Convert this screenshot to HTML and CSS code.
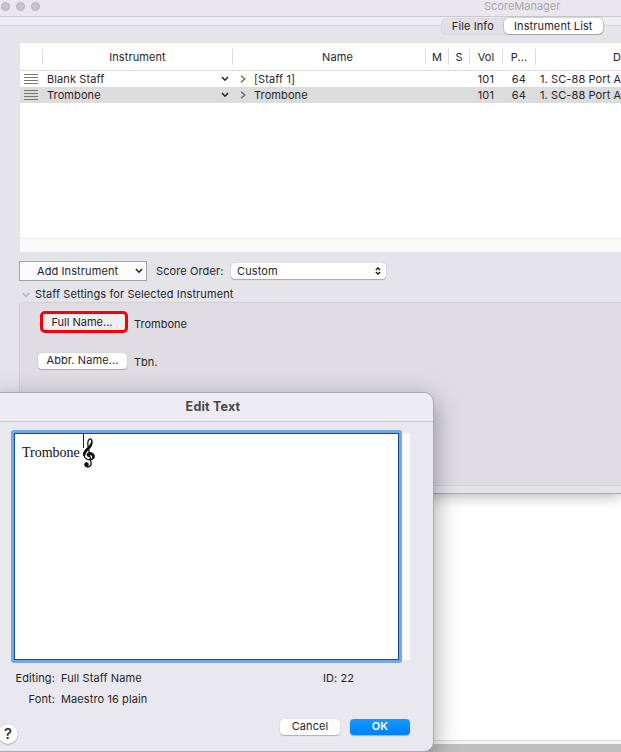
FILE: index.html
```html
<!DOCTYPE html>
<html lang="en">
<head>
    <meta charset="utf-8">
    <title>ScoreManager</title>
    <link rel="stylesheet" href="styles.css">
</head>
<body>
    <div class="desktop">
        <div class="manager">
            <div class="titlebar">
                <div class="lights"><i></i><i></i><i></i></div>
                <span class="title">ScoreManager</span>
            </div>
            <div class="tabbar">
                <div class="tabs">
                    <span class="tab">File Info</span>
                    <span class="tab active">Instrument List</span>
                </div>
            </div>

            <div class="table">
                <div class="row head">
                    <span></span>
                    <span>Instrument</span>
                    <span class="name-head">Name</span>
                    <span>M</span>
                    <span>S</span>
                    <span>Vol</span>
                    <span>P...</span>
                    <span class="device">D</span>
                </div>
                <div class="row">
                    <span class="grip"><svg width="14" height="11"><path d="M0 1.5h14M0 4.5h14M0 7.5h14M0 10.5h14"/></svg></span>
                    <span class="instrument">Blank Staff <svg class="down" width="8" height="6"><path d="M1 1l3 3.2L7 1"/></svg></span>
                    <span class="name"><svg class="right" width="6" height="8"><path d="M1 .8L4.8 4 1 7.2"/></svg>[Staff 1]</span>
                    <span></span>
                    <span></span>
                    <span class="num">101</span>
                    <span class="num">64</span>
                    <span class="port">1. SC-88 Port A</span>
                </div>
                <div class="row selected">
                    <span class="grip"><svg width="14" height="11"><path d="M0 1.5h14M0 4.5h14M0 7.5h14M0 10.5h14"/></svg></span>
                    <span class="instrument">Trombone <svg class="down" width="8" height="6"><path d="M1 1l3 3.2L7 1"/></svg></span>
                    <span class="name"><svg class="right" width="6" height="8"><path d="M1 .8L4.8 4 1 7.2"/></svg>Trombone</span>
                    <span></span>
                    <span></span>
                    <span class="num">101</span>
                    <span class="num">64</span>
                    <span class="port">1. SC-88 Port A</span>
                </div>
                <div class="scroll-track"></div>
            </div>

            <div class="controls">
                <div class="add">Add Instrument <svg class="down" width="8" height="6"><path d="M1 1l3 3.2L7 1"/></svg></div>
                <span class="order-label">Score Order:</span>
                <div class="select">Custom <svg class="updown" width="6" height="8"><path d="M.8 3L3 .9 5.2 3M.8 5L3 7.1 5.2 5"/></svg></div>
            </div>

            <div class="disclosure">
                <svg width="8" height="6"><path d="M.8 1L4 4.6 7.2 1"/></svg>
                <span>Staff Settings for Selected Instrument</span>
            </div>
            <div class="settings">
                <div class="setting">
                    <div class="button marked">Full Name...</div>
                    <span>Trombone</span>
                </div>
                <div class="setting">
                    <div class="button">Abbr. Name...</div>
                    <span>Tbn.</span>
                </div>
            </div>
        </div>
        <div class="document"></div>
        <div class="document-edge"></div>

        <div class="dialog">
            <div class="dialog-title">Edit Text</div>
            <div class="editor">
                <div class="textarea">
                    <span class="text">Trombone</span>
                    <div class="caret"></div>
                    <svg class="clef" width="14" height="32" viewBox="0 0 14 32">
                        <path class="stroke" d="M7.3 19.7C5.4 19.3 5.2 16.9 7.1 16.2C9.7 15.3 11.9 17.3 11.5 19.8C11.1 22.6 7.3 23.5 4.6 22C1.5 20.2 1.2 16.5 3.2 13.8C5.2 11.2 9.5 8.3 9.7 4.7C9.8 2.8 9.1 1.5 8.1 1.9C6.2 2.8 5.5 6 6 9L9.1 26.1C9.6 29.3 5.4 31.2 3.4 28.9"/>
                        <path class="fill" d="M.8 18.5C.8 14.7 3.8 12 6.3 9.6C8.2 7.7 9.2 6.3 9 3.7L10.4 3.5C11.2 7.4 9.6 10.2 7.5 12.2C5.1 14.5 3.3 16 3.2 19ZM7 15.3C10.9 14.5 13.9 17.8 12.6 20.8C12 22.2 10.2 23.2 9 23C11.2 20.7 10.3 18 7.6 18.1C6.3 18.2 6 19.2 7.5 20.1C3.8 19.6 3.7 16 7 15.3Z"/>
                        <circle class="fill" cx="4.5" cy="27.5" r="2.3"/>
                    </svg>
                </div>
                <div class="gutter"></div>
            </div>
            <div class="info">
                <span class="label">Editing:</span><span>Full Staff Name</span><span>ID: 22</span>
                <span class="label">Font:</span><span>Maestro 16 plain</span>
            </div>
            <div class="actions">
                <div class="help">?</div>
                <div class="button cancel">Cancel</div>
                <div class="button ok">OK</div>
            </div>
        </div>
    </div>
</body>
</html>
```
FILE: styles.css
```css
* {
    box-sizing: border-box;
}
body {
    margin: 0;
    font-family: Inter, "Liberation Sans", sans-serif;
    font-size: 11px;
    letter-spacing: 0.1px;
    line-height: 16px;
    color: #262528;
}
svg {
    display: block;
    flex: none;
    fill: none;
    stroke: #222;
}
.desktop {
    position: relative;
    width: 621px;
    height: 752px;
    overflow: hidden;
    background: #fff;
}

/* main window */
.manager {
    height: 494px;
    background: #e5e4e9;
    border-bottom: 1px solid #aaa9ac;
    box-shadow: 0 2px 14px rgba(0,0,0,0.3);
    position: relative;
}
.titlebar {
    display: flex;
    height: 17px;
    background: #e9e7ec;
    border-bottom: 1px solid #c9c8cc;
}
.lights {
    display: flex;
    gap: 6px;
    padding-top: 2px;
    padding-left: 1px;
    width: 484px;
}
.lights i {
    width: 9px;
    height: 9px;
    border-radius: 50%;
    background: #c6c4c8;
    border: 1px solid #b4b2b6;
}
.title {
    color: #aaa8ad;
    line-height: 13px;
    letter-spacing: 0;
}
.tabbar {
    height: 9px;
    background: #edecf1;
    border-bottom: 1px solid #d8d7db;
    padding: 1px 0 0 441px;
}
.tabs {
    display: flex;
    width: 163px;
    height: 17px;
    background: #e1e0e5;
    border: 1px solid #dad9dd;
    border-radius: 5px;
}
.tab {
    width: 62px;
    text-align: center;
    line-height: 15px;
}
.tab.active {
    width: 100px;
    height: 16px;
    margin-top: -1px;
    line-height: 17px;
    background: #fff;
    border-radius: 5px;
    box-shadow: 0 0 1px 1px rgba(0,0,0,0.12), 0 1px 1px rgba(0,0,0,0.15);
}

/* instrument table */
.table {
    display: flex;
    flex-direction: column;
    height: 209px;
    margin: 17px 0 0 20px;
    background: #fff;
}
.row {
    display: grid;
    grid-template-columns: 23px 190px 193px 23px 21px 33px 33px 1fr;
    height: 16px;
    white-space: nowrap;
    align-items: center;
}
.head {
    height: 28px;
    border-bottom: 1px solid #dedede;
    text-align: center;
}
.head span {
    height: 16px;
    border-right: 1px solid #dcdcdc;
}
.head .name-head {
    padding-left: 17px;
}
.head .device {
    border: 0;
    padding-left: 77px;
    text-align: left;
    letter-spacing: 0;
}
.selected {
    background: #dcdcdc;
}
.grip {
    padding: 0 0 2px 4px;
}
.grip svg {
    stroke: #777;
}
.instrument {
    display: flex;
    align-items: center;
    justify-content: space-between;
    padding: 0 4px;
}
.down {
    stroke-width: 1.5;
}
.name {
    display: flex;
    align-items: center;
    gap: 8px;
    padding-left: 7px;
}
.right {
    stroke: #666;
    stroke-width: 1.3;
}
.num {
    text-align: right;
    padding-right: 9px;
}
.num + .num {
    padding-right: 10px;
}
.port {
    padding-left: 4px;
}
.scroll-track {
    height: 14px;
    margin-top: auto;
    background: #fafafa;
    border-top: 1px solid #e6e6e6;
}

.controls {
    display: flex;
    align-items: center;
    height: 20px;
    margin: 9px 0 0 19px;
}
.add {
    display: flex;
    align-items: center;
    justify-content: space-between;
    width: 128px;
    height: 20px;
    padding: 0 3px 0 17px;
    background: #fbfbfb;
    border: 1px solid #a3a2a5;
}
.order-label {
    width: 84px;
    padding-left: 9px;
    white-space: nowrap;
}
.select {
    display: flex;
    align-items: center;
    justify-content: space-between;
    width: 155px;
    height: 16px;
    padding: 0 5px 0 6px;
    background: #fff;
    border-radius: 4px;
    box-shadow: 0 0 1px rgba(0,0,0,0.3), 0 1px 1px rgba(0,0,0,0.25);
}
.updown {
    stroke-width: 1.4;
}
.disclosure {
    display: flex;
    align-items: center;
    gap: 5px;
    height: 16px;
    margin: 5px 0 0 22px;
}
.disclosure svg {
    margin-top: 2px;
    stroke: #b5b4b8;
    stroke-width: 1.3;
}
.settings {
    height: 184px;
    margin: 0 -5px 0 19px;
    padding: 10px 0 0 18px;
    background: #dfdde2;
    border: 1px solid #d1d0d4;
    border-radius: 4px;
}
.setting {
    display: flex;
    height: 38px;
    gap: 7px;
}
.setting > span {
    padding-top: 3px;
    letter-spacing: 0;
}
.button {
    width: 89px;
    height: 16px;
    background: #fff;
    border-radius: 4px;
    text-align: center;
    box-shadow: 0 0 1px rgba(0,0,0,0.25), 0 1px 1px rgba(0,0,0,0.22);
}
.setting .button {
    margin-top: 2px;
    line-height: 15px;
}
.setting .marked {
    width: 88px;
    height: 22px;
    margin: -2px -1px 0 2px;
    padding-right: 4px;
    line-height: 17px;
    letter-spacing: 0;
    background: #efeef0;
    border: 3px solid #f80008;
    border-radius: 5px;
    box-shadow: none;
}

/* score page behind the windows */
.document {
    height: 247px;
    border-bottom: 1px solid #ddd;
}
.document-edge {
    height: 11px;
    border-top: 3px solid #f6f6f6;
    background: #c0c0c0;
}

/* text dialog */
.dialog {
    position: absolute;
    left: -12px;
    top: 392px;
    width: 446px;
    height: 360px;
    padding-left: 12px;
    background: #e9e8ee;
    border: 1px solid #aaa9ad;
    border-radius: 10px;
    box-shadow: 0 8px 26px rgba(0,0,0,0.38);
}
.dialog-title {
    height: 29px;
    margin-left: -12px;
    padding-left: 4px;
    background: #edecf2;
    border-bottom: 1px solid #c8c7cb;
    border-radius: 10px 10px 0 0;
    text-align: center;
    font-size: 12.5px;
    font-weight: 700;
    line-height: 28px;
    letter-spacing: 0.2px;
    color: #48474b;
}
.editor {
    display: flex;
    align-items: center;
    padding: 8px 0 0 10px;
}
.textarea {
    display: flex;
    width: 391px;
    height: 233px;
    padding-left: 8px;
    background: #fff;
    border: 3px solid #74a7e6;
    border-radius: 3px;
    box-shadow: inset 0 0 0 1px #164b8c;
}
.text {
    width: 61px;
    padding-top: 12px;
    font-family: "Liberation Serif", serif;
    font-size: 14px;
    letter-spacing: 0;
    color: #111;
}
.caret {
    width: 1px;
    height: 14px;
    margin-top: 1px;
    background: #222;
}
.clef {
    margin: 4px 0 0 -2px;
}
.clef .stroke {
    stroke: #111;
    stroke-width: 1.3;
}
.clef .fill {
    fill: #111;
    stroke: none;
}
.gutter {
    width: 8px;
    height: 227px;
    background: #fafafa;
}
.info {
    display: grid;
    grid-template-columns: 54px 256px 1fr;
    column-gap: 6px;
    row-gap: 5px;
    margin-top: 7px;
}
.label {
    text-align: right;
}
.actions {
    display: flex;
    height: 30px;
    padding-top: 12px;
}
.help {
    width: 20px;
    height: 20px;
    margin: 5px 262px 0 -3px;
    border-radius: 50%;
    background: #fff;
    box-shadow: 0 0 1px rgba(0,0,0,0.35), 0 1px 1px rgba(0,0,0,0.2);
    text-align: center;
    font-size: 15px;
    font-weight: 500;
    line-height: 20px;
}
.cancel {
    width: 60px;
    line-height: 15px;
}
.ok {
    width: 60px;
    margin-left: 10px;
    background: linear-gradient(#189bff, #007ffb);
    color: #fff;
    font-weight: 600;
    line-height: 15px;
}
```
